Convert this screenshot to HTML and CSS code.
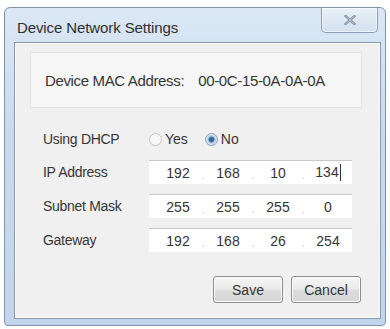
FILE: index.html
```html
<!DOCTYPE html>
<html lang="en">
<head>
  <meta charset="UTF-8" />
  <meta name="viewport" content="width=device-width, initial-scale=1.0"/>
  <title>Device Network Settings</title>
  <link rel="stylesheet" href="styles.css">
</head>
<body>
  <div class="window">
    <div class="titlebar">
      <div class="title">Device Network Settings</div>
      <div class="close-btn">
        <svg width="12" height="10" viewBox="0 0 12 10">
          <path d="M1.5 1 L10.5 9 M10.5 1 L1.5 9" stroke="#8592a3" stroke-width="2.4" stroke-linecap="square" fill="none"/>
          <path d="M1.5 1 L10.5 9 M10.5 1 L1.5 9" stroke="#c9d3df" stroke-width="0.8" fill="none"/>
        </svg>
      </div>
    </div>

    <div class="panel">
      <div class="mac-box">
        <span class="mac-label">Device MAC Address:</span>
        <span class="mac-value">00-0C-15-0A-0A-0A</span>
      </div>

      <div class="form">
        <div class="label">Using DHCP</div>
        <div class="radios">
          <label class="radio"><span class="dot-btn"></span>Yes</label>
          <label class="radio"><span class="dot-btn checked"></span>No</label>
        </div>

        <div class="label">IP Address</div>
        <div class="ip-field">
          <span class="octet">192</span><span class="sep">.</span>
          <span class="octet">168</span><span class="sep">.</span>
          <span class="octet">10</span><span class="sep">.</span>
          <span class="octet">134<span class="caret"></span></span>
        </div>

        <div class="label">Subnet Mask</div>
        <div class="ip-field">
          <span class="octet">255</span><span class="sep">.</span>
          <span class="octet">255</span><span class="sep">.</span>
          <span class="octet">255</span><span class="sep">.</span>
          <span class="octet">0</span>
        </div>

        <div class="label">Gateway</div>
        <div class="ip-field">
          <span class="octet">192</span><span class="sep">.</span>
          <span class="octet">168</span><span class="sep">.</span>
          <span class="octet">26</span><span class="sep">.</span>
          <span class="octet">254</span>
        </div>
      </div>

      <div class="actions">
        <button class="btn">Save</button>
        <button class="btn">Cancel</button>
      </div>
    </div>
  </div>
</body>
</html>
```

FILE: styles.css
```css
body {
  margin: 0;
  background: #fff;
  font-family: 'Liberation Sans', Arial, sans-serif;
  color: #353535;
}

.window {
  margin: 7px 0 0 4px;
  width: 380px;
  height: 317px;
  border: 1px solid #7f93ab;
  border-radius: 6px 6px 4px 4px;
  background: linear-gradient(to bottom, #dbe7f4 0%, #c9daed 40%, #c3d5ea 100%);
  display: flex;
  flex-direction: column;
}

.titlebar {
  height: 34px;
  display: flex;
  justify-content: space-between;
  align-items: flex-start;
}

.title {
  font-size: 15px;
  color: #2f2f2f;
  padding: 11px 0 0 12px;
  letter-spacing: -0.1px;
}

.close-btn {
  width: 55px;
  height: 24px;
  margin-right: 7px;
  border: 1px solid #8c9db3;
  border-top: none;
  border-radius: 0 0 5px 5px;
  background: linear-gradient(to bottom, #e9f0f8, #d3e0ee);
  box-shadow: inset 0 0 0 1px rgba(255, 255, 255, 0.6);
  display: flex;
  justify-content: center;
  align-items: center;
}

.panel {
  flex: 1;
  margin: 0 4px 6px 9px;
  border: 1px solid #8799b0;
  background: #f0f0f0;
  box-shadow: inset 0 0 0 1px #fbfbfb;
  display: flex;
  flex-direction: column;
}

.mac-box {
  margin: 9px 18px 0 15px;
  height: 54px;
  border: 1px solid #e4e4e4;
  background: #f6f6f6;
  display: flex;
  align-items: center;
  padding-left: 14px;
  font-size: 15px;
  letter-spacing: -0.35px;
}

.mac-value {
  margin-left: 14px;
}

.form {
  margin: 20px 0 0 28px;
  display: grid;
  grid-template-columns: 106px 203px;
  grid-template-rows: 22px 24px 24px 24px;
  row-gap: 10px;
  align-items: center;
  font-size: 14px;
}

.label {
  letter-spacing: -0.3px;
}

.radios {
  display: flex;
  gap: 17px;
  align-items: center;
}

.radio {
  display: flex;
  align-items: center;
  gap: 3px;
}

.dot-btn {
  width: 11px;
  height: 11px;
  border-radius: 50%;
  border: 1px solid #c4c4c4;
  background: #f8f8f8;
}

.dot-btn.checked {
  border-color: #8aa0b8;
  background: radial-gradient(circle, #2d5f8f 0, #3e74a6 2.5px, #b9cde0 3.5px, #e8eef5 6px);
}

.ip-field {
  height: 24px;
  background: #fff;
  border-top: 1px solid #c8c8c8;
  box-sizing: border-box;
  display: flex;
  align-items: center;
  padding-left: 8px;
  font-size: 14px;
}

.octet {
  width: 42px;
  text-align: center;
}

.sep {
  width: 8px;
  text-align: center;
  color: #c2c2c2;
  font-size: 11px;
  padding-top: 5px;
}

.caret {
  display: inline-block;
  width: 1px;
  height: 17px;
  background: #333;
  vertical-align: -4px;
  margin-left: 1px;
}

.actions {
  margin: 24px 19px 0 0;
  display: flex;
  justify-content: flex-end;
  gap: 8px;
}

.btn {
  width: 70px;
  height: 27px;
  border: 1px solid #8e8e8e;
  border-radius: 3px;
  background: linear-gradient(to bottom, #f6f6f6 0%, #eaeaea 48%, #dddddd 52%, #d6d6d6 100%);
  box-shadow: inset 0 0 0 1px #fcfcfc;
  font-family: 'Liberation Sans', Arial, sans-serif;
  font-size: 14px;
  color: #353535;
  padding: 0;
}
```
